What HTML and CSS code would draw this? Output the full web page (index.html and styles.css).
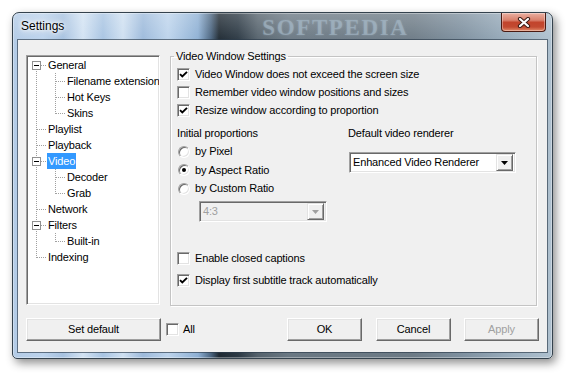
FILE: index.html
```html
<!DOCTYPE html>
<html>
<head>
<meta charset="utf-8">
<title>Settings</title>
<link rel="stylesheet" href="styles.css">
</head>
<body>
<div class="win">
  <div class="titlebar">
    <span class="title">Settings</span>
    <span class="mark">SOFTPEDIA</span>
    <span class="close"><svg width="14" height="11" viewBox="0 0 14 11"><path d="M3 2 L11 9 M11 2 L3 9" stroke="#3a1a14" stroke-width="4.2" stroke-linecap="round"/><path d="M3 2 L11 9 M11 2 L3 9" stroke="#fff" stroke-width="2.2" stroke-linecap="round"/></svg></span>
  </div>
  <div class="client">
    <div class="main">
      <div class="tree">
        <div class="row"><span class="g f"><span class="bx"></span></span><span class="lab">General</span></div>
        <div class="row"><span class="g i"></span><span class="g t"></span><span class="lab">Filename extension</span></div>
        <div class="row"><span class="g i"></span><span class="g t"></span><span class="lab">Hot Keys</span></div>
        <div class="row"><span class="g i"></span><span class="g l"></span><span class="lab">Skins</span></div>
        <div class="row"><span class="g t"></span><span class="lab">Playlist</span></div>
        <div class="row"><span class="g t"></span><span class="lab">Playback</span></div>
        <div class="row"><span class="g t"><span class="bx"></span></span><span class="lab sel">Video</span></div>
        <div class="row"><span class="g i"></span><span class="g t"></span><span class="lab">Decoder</span></div>
        <div class="row"><span class="g i"></span><span class="g l"></span><span class="lab">Grab</span></div>
        <div class="row"><span class="g t"></span><span class="lab">Network</span></div>
        <div class="row"><span class="g t"><span class="bx"></span></span><span class="lab">Filters</span></div>
        <div class="row"><span class="g i"></span><span class="g l"></span><span class="lab">Built-in</span></div>
        <div class="row"><span class="g l"></span><span class="lab">Indexing</span></div>
      </div>
      <fieldset class="group">
        <legend>Video Window Settings</legend>
        <div class="chk"><span class="cb on"><svg width="11" height="11" viewBox="0 0 11 11"><path d="M2 5.2 L4.3 7.5 L9 2.8" fill="none" stroke="#000" stroke-width="1.9"/></svg></span>Video Window does not exceed the screen size</div>
        <div class="chk"><span class="cb"></span>Remember video window positions and sizes</div>
        <div class="chk"><span class="cb on"><svg width="11" height="11" viewBox="0 0 11 11"><path d="M2 5.2 L4.3 7.5 L9 2.8" fill="none" stroke="#000" stroke-width="1.9"/></svg></span>Resize window according to proportion</div>
        <div class="cols">
          <div class="col-left">
            <div class="lbl">Initial proportions</div>
            <div class="rad first"><span class="rb"></span>by Pixel</div>
            <div class="rad"><span class="rb on"></span>by Aspect Ratio</div>
            <div class="rad"><span class="rb"></span>by Custom Ratio</div>
            <div class="combo ratio dis"><span class="val">4:3</span><span class="dd"><svg width="7" height="4" viewBox="0 0 7 4"><path d="M0 0 H7 L3.5 4 Z" fill="#a0a0a0"/></svg></span></div>
          </div>
          <div class="col-right">
            <div class="lbl">Default video renderer</div>
            <div class="combo renderer"><span class="val">Enhanced Video Renderer</span><span class="dd"><svg width="7" height="4" viewBox="0 0 7 4"><path d="M0 0 H7 L3.5 4 Z" fill="#000"/></svg></span></div>
          </div>
        </div>
        <div class="chk cap"><span class="cb"></span>Enable closed captions</div>
        <div class="chk sub"><span class="cb on"><svg width="11" height="11" viewBox="0 0 11 11"><path d="M2 5.2 L4.3 7.5 L9 2.8" fill="none" stroke="#000" stroke-width="1.9"/></svg></span>Display first subtitle track automatically</div>
      </fieldset>
    </div>
    <div class="bottom">
      <button class="btn wide">Set default</button>
      <span class="cb all"></span><span class="all-lbl">All</span>
      <button class="btn ok">OK</button>
      <button class="btn cancel">Cancel</button>
      <button class="btn apply">Apply</button>
    </div>
  </div>
</div>
</body>
</html>
```

FILE: styles.css
```css
* { box-sizing: border-box; }
html, body { margin: 0; background: #fff; }
body {
  font: 11px/1 "Liberation Sans", Arial, sans-serif;
  letter-spacing: -0.15px;
  color: #000;
  width: 573px;
  height: 380px;
  overflow: hidden;
}

/* window frame */
.win {
  margin: 12px 0 0 12px;
  width: 541px;
  height: 347px;
  padding: 0 5px 6px 5px;
  border: 1px solid #34424d;
  border-radius: 7px 7px 5px 5px;
  display: flex;
  flex-direction: column;
  background:
    linear-gradient(to bottom, rgba(255,255,255,.22), rgba(255,255,255,0) 30px),
    linear-gradient(to right,
      #b3cbe6 0px, #bcd3ec 30px, #a7c2e0 50px, #d3e3f3 70px, #a8c4e2 90px,
      #cfe0f1 110px, #9dbadb 130px, #bdd4ec 155px, #8eb0d4 185px, #4b6580 198px,
      #1f2a33 206px, #2c3944 225px, #56636d 245px, #6a7883 275px, #6d7b86 400px,
      #7f91a0 450px, #9aaebe 500px, #b0c2d0 541px);
  box-shadow: 3px 4px 10px rgba(0,0,0,.45), inset 0 0 0 1px rgba(255,255,255,.35);
}

.titlebar {
  height: 27px;
  flex: none;
  display: flex;
  align-items: flex-start;
  overflow: hidden;
}
.title {
  margin: 6px 0 0 3px;
  font: 12px/14px "Liberation Sans", Arial, sans-serif;
  letter-spacing: 0;
  color: #000;
  text-shadow: 0 0 6px #fff, 0 0 3px #fff, 0 0 8px #fff;
}
.mark {
  margin: 3px 0 0 198px;
  font: bold 23px/1 "Liberation Serif", "Times New Roman", serif;
  letter-spacing: 1.6px;
  color: rgba(170, 190, 206, .5);
  text-shadow: 0 0 2px rgba(170, 190, 206, .4);
}
.close {
  margin-left: auto;
  margin-right: 1px;
  width: 45px;
  height: 19px;
  border: 1px solid #4a1a12;
  border-top: none;
  border-radius: 0 0 4px 4px;
  background: linear-gradient(to bottom, #eab0a2 0%, #d9806c 40%, #c2442c 52%, #c24a31 78%, #e38d6c 100%);
  box-shadow: inset 0 0 0 1px rgba(255,255,255,.35);
  display: flex;
  align-items: center;
  justify-content: center;
}

/* client area */
.client {
  flex: 1;
  background: #f0f0f0;
  box-shadow: 0 0 0 1px rgba(45,60,75,.65);
  padding: 10px 10px 11px 8px;
  display: flex;
  flex-direction: column;
}
.main {
  display: flex;
  align-items: flex-start;
  gap: 10px;
  height: 256px;
}

/* tree */
.tree {
  margin-top: 5px;
  width: 134px;
  height: 250px;
  background: #fff;
  border: 1px solid;
  border-color: #a0a0a0 #fff #fff #a0a0a0;
  box-shadow: inset 1px 1px 0 #696969, inset -1px -1px 0 #e3e3e3;
  padding: 1px 0 0 1px;
  overflow: hidden;
}
.row {
  display: flex;
  height: 16px;
  align-items: center;
  white-space: nowrap;
}
.g {
  flex: none;
  width: 19px;
  height: 16px;
  display: flex;
  align-items: center;
  padding-left: 4px;
  background-repeat: no-repeat;
}
.g.t {
  background-image:
    repeating-linear-gradient(to right, #a0a0a0 0 1px, transparent 1px 2px),
    repeating-linear-gradient(to bottom, #a0a0a0 0 1px, transparent 1px 2px);
  background-position: 9px 8px, 8px 0;
  background-size: 10px 1px, 1px 16px;
}
.g.l {
  background-image:
    repeating-linear-gradient(to right, #a0a0a0 0 1px, transparent 1px 2px),
    repeating-linear-gradient(to bottom, #a0a0a0 0 1px, transparent 1px 2px);
  background-position: 9px 8px, 8px 0;
  background-size: 10px 1px, 1px 9px;
}
.g.f {
  background-image:
    repeating-linear-gradient(to right, #a0a0a0 0 1px, transparent 1px 2px),
    repeating-linear-gradient(to bottom, #a0a0a0 0 1px, transparent 1px 2px);
  background-position: 9px 8px, 8px 8px;
  background-size: 10px 1px, 1px 8px;
}
.g.i {
  background-image: repeating-linear-gradient(to bottom, #a0a0a0 0 1px, transparent 1px 2px);
  background-position: 8px 0;
  background-size: 1px 16px;
}
.bx {
  width: 9px;
  height: 9px;
  border: 1px solid #919191;
  background: #fff linear-gradient(#000, #000) center / 5px 1px no-repeat;
}
.lab {
  height: 16px;
  line-height: 16px;
  padding: 0 1px;
}
.lab.sel {
  background: #3399ff;
  color: #fff;
}

/* group box */
.group {
  margin: 0;
  width: 367px;
  height: 256px;
  min-width: 0;
  padding: 2px 0 0 6px;
  border: 1px solid #c4c4c4;
  box-shadow: 1px 1px 0 #fff, inset 1px 1px 0 #fff;
}
.group legend {
  padding: 0 2px;
  margin-left: -3px;
  line-height: 13px;
}
.chk {
  display: flex;
  align-items: center;
  height: 18px;
  gap: 5px;
  white-space: nowrap;
}
.cb {
  flex: none;
  width: 13px;
  height: 13px;
  background: #fff;
  border: 1px solid;
  border-color: #a0a0a0 #fff #fff #a0a0a0;
  box-shadow: inset 1px 1px 0 #696969, inset -1px -1px 0 #e3e3e3;
  display: flex;
  align-items: center;
  justify-content: center;
}
.cb svg { display: block; }
.cols {
  display: flex;
  margin-top: 6px;
}
.col-left { width: 171px; }
.col-right { flex: 1; }
.lbl {
  height: 16px;
  line-height: 16px;
  white-space: nowrap;
}
.rad {
  display: flex;
  align-items: center;
  height: 18.5px;
  gap: 5px;
  padding-left: 1px;
}
.rad.first { margin-top: 1.5px; }
.rb {
  width: 12px;
  height: 12px;
  border-radius: 50%;
  border: 1px solid;
  border-color: #a0a0a0 #fff #fff #a0a0a0;
  background: #fff;
  box-shadow: inset 1px 1px 0 #696969, inset -1px -1px 0 #e3e3e3;
  display: flex;
  align-items: center;
  justify-content: center;
}
.rb.on::after {
  content: "";
  width: 4px;
  height: 4px;
  border-radius: 50%;
  background: #000;
}

.combo {
  display: flex;
  align-items: center;
  height: 21px;
  padding: 2px;
  background: #fff;
  border: 1px solid;
  border-color: #a0a0a0 #fff #fff #a0a0a0;
  box-shadow: inset 1px 1px 0 #696969, inset -1px -1px 0 #e3e3e3;
}
.combo .val {
  flex: 1;
  padding-left: 1px;
  white-space: nowrap;
}
.dd {
  flex: none;
  width: 17px;
  height: 17px;
  background: #f0f0f0;
  border: 1px solid;
  border-color: #e3e3e3 #696969 #696969 #e3e3e3;
  box-shadow: inset 1px 1px 0 #fff, inset -1px -1px 0 #a0a0a0;
  display: flex;
  align-items: center;
  justify-content: center;
}
.dd svg { display: block; }
.combo.ratio {
  margin: 3px 0 0 22px;
  width: 128px;
}
.combo.dis { background: #f0f0f0; color: #a0a0a0; }
.combo.renderer {
  margin: 11px 0 0 1px;
  width: 167px;
}
.chk.cap { margin-top: 27px; }
.chk.sub { margin-top: 4px; }

/* bottom row */
.bottom {
  margin-top: 12px;
  margin-right: -2px;
  height: 23px;
  display: flex;
  align-items: center;
}
.btn {
  flex: none;
  width: 75px;
  height: 23px;
  padding: 0;
  margin: 0;
  font: 11px/1 "Liberation Sans", Arial, sans-serif;
  letter-spacing: -0.15px;
  color: #000;
  background: #f0f0f0;
  border: 1px solid;
  border-color: #fff #696969 #696969 #fff;
  box-shadow: inset -1px -1px 0 #a0a0a0, inset 1px 1px 0 #e3e3e3;
}
.btn.wide { width: 135px; }
.cb.all { margin-left: 5px; }
.all-lbl { margin-left: 4px; }
.btn.ok { margin-left: auto; margin-right: 14px; }
.btn.cancel { margin-right: 13px; }
.btn.apply { color: #a0a0a0; }
```
